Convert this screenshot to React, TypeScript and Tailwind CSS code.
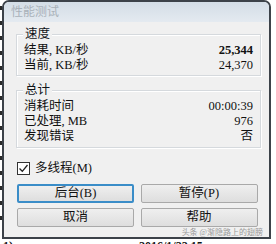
import React from "react";

const font = { fontFamily: '"Liberation Serif", "Noto Sans CJK SC", serif' };

function Group({ title, children, className }: { title: string; children: React.ReactNode; className?: string }) {
  return (
    <div className={"relative border border-[#d5d9dd] shadow-[inset_1px_1px_0_#ffffff,1px_1px_0_#ffffff] " + (className ?? "")}>
      <span className="absolute -top-[9px] left-[6px] bg-[#f0f0f0] px-[2px] text-[12.5px] leading-[16px] text-[#101418]">{title}</span>
      {children}
    </div>
  );
}

function Row({ label, value, bold }: { label: string; value: string; bold?: boolean }) {
  return (
    <div className="flex h-[15px] items-center justify-between text-[12.5px] leading-[15px] text-[#111]">
      <span>{label}</span>
      <span className={bold ? "font-bold" : ""}>{value}</span>
    </div>
  );
}

function Btn({ children, primary }: { children: React.ReactNode; primary?: boolean }) {
  return (
    <button
      className={
        "flex h-[19px] w-[117px] items-center justify-center rounded-[2px] bg-gradient-to-b from-[#efefef] to-[#dedede] text-[12.5px] leading-[15px] text-[#111] " +
        (primary ? "border-2 border-[#3a8dc8]" : "border border-[#a9a9a9]")
      }
      style={font}
    >
      {children}
    </button>
  );
}

export default function App() {
  return (
    <div className="relative h-[244px] w-[276px] overflow-hidden bg-white" style={font}>
      <div className="flex">
        <div className="flex w-[2px] flex-col gap-[11px] pt-[6px]">
          {[0, 1, 2, 3, 4, 5, 6, 7, 8, 9, 10, 11, 12, 13, 14].map((i) => (
            <span key={i} className="h-[4px] w-[2px] bg-[#2a2a2a]" />
          ))}
        </div>
        <div className="flex h-[239px] w-[269px] flex-col rounded-t-[7px] border-2 border-[#3c4249] bg-[#f0f0f0]">
          <div className="flex h-[25px] items-center rounded-t-[5px] bg-gradient-to-b from-[#d3dde6] to-[#e4eaf0] pl-[7px] text-[12px] text-[#a9b1b9]">
            性能测试
          </div>
          <div className="flex flex-1 flex-col pl-[12px] pr-[4px] pt-[12px]">
            <Group title="速度" className="h-[42px] w-[245px] pl-[7px] pr-[7px] pt-[8px]">
              <Row label="结果, KB/秒" value="25,344" bold />
              <Row label="当前, KB/秒" value="24,370" />
            </Group>
            <Group title="总计" className="mt-[14px] h-[58px] w-[245px] pl-[7px] pr-[7px] pt-[8px]">
              <Row label="消耗时间" value="00:00:39" />
              <Row label="已处理, MB" value="976" />
              <Row label="发现错误" value="否" />
            </Group>
            <div className="mt-[13px] flex items-center gap-[5px] pl-[1px]">
              <span className="flex h-[13px] w-[13px] items-center justify-center border border-[#333] bg-white">
                <svg width="11" height="11" viewBox="0 0 11 11">
                  <path d="M1.5 5.5 L4.3 8.3 L9.5 2" fill="none" stroke="#222" strokeWidth="1.3" />
                </svg>
              </span>
              <span className="text-[12.5px] leading-[15px] text-[#111]">多线程(M)</span>
            </div>
            <div className="mt-[8px] grid w-[241px] grid-cols-2 gap-x-[7px] gap-y-[5px] pl-[1px]">
              <Btn primary>后台(B)</Btn>
              <Btn>暂停(P)</Btn>
              <Btn>取消</Btn>
              <Btn>帮助</Btn>
            </div>
            <div className="flex justify-end pr-[2px] pt-[1px] text-[8px] leading-[9px] text-[#9a9a9a]">
              头条 @渐隐路上的翅膀
            </div>
          </div>
        </div>
      </div>
      <div className="flex h-[12px] text-[12px] font-bold leading-[14px] text-[#111]">
        <span className="pl-[3px]">1)</span>
        <span className="pl-[126px]">2016/1/22 15</span>
      </div>
    </div>
  );
}
